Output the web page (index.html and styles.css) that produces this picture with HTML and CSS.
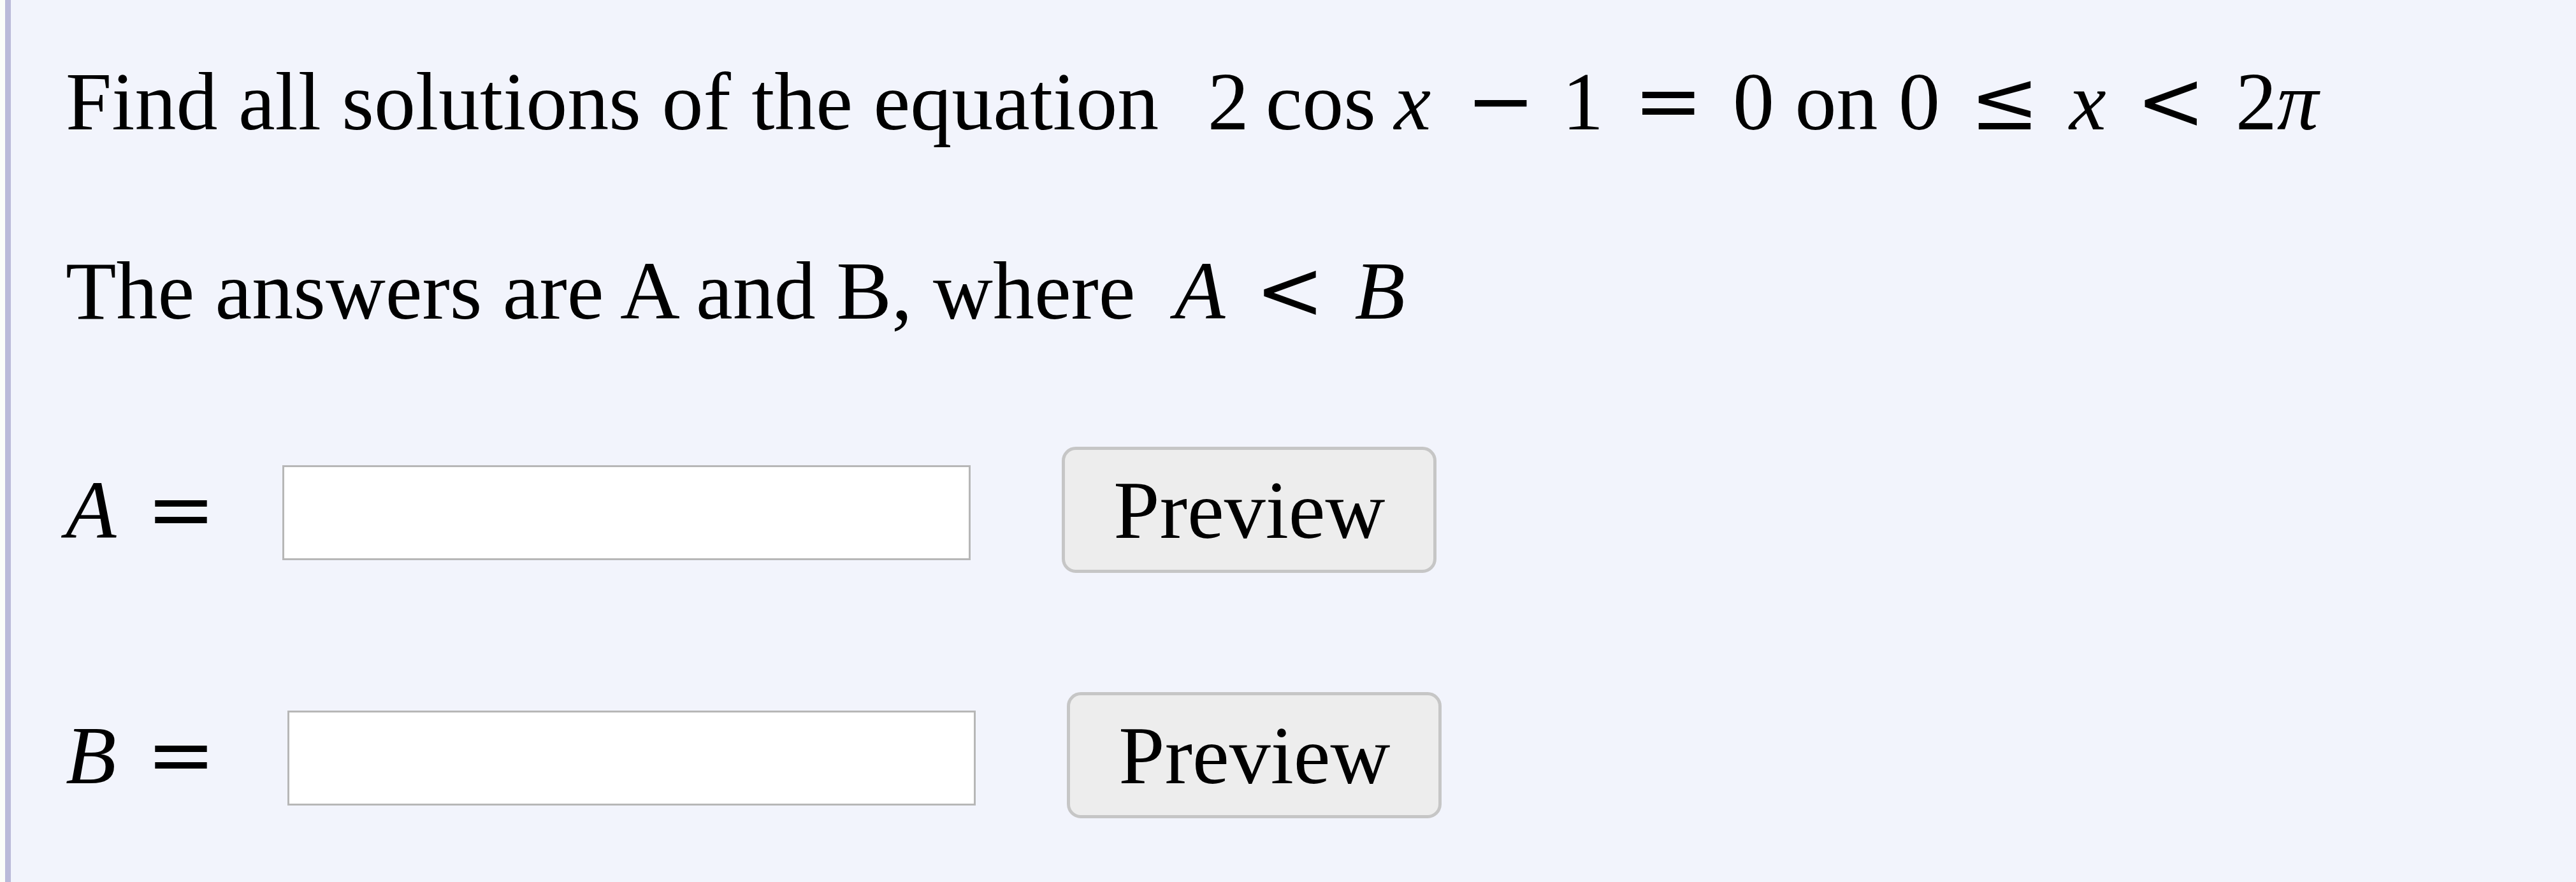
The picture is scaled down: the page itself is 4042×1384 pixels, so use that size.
FILE: index.html
```html
<!DOCTYPE html>
<html lang="en">
<head>
    <meta charset="UTF-8">
    <title>Problem</title>
    <link rel="stylesheet" href="styles.css">
</head>
<body>
    <div class="problem">
        <p class="line first">
            Find all solutions of the equation
            <span class="math math-lead">2<span class="fn">cos</span><i>x</i><span class="bin">&minus;</span>1<span class="rel">=</span>0</span>
            on
            <span class="math">0<span class="rel">&le;</span><i>x</i><span class="rel">&lt;</span>2<i>&pi;</i></span>
        </p>

        <p class="line">
            The answers are A and B, where
            <span class="math math-short"><i>A</i><span class="rel">&lt;</span><i>B</i></span>
        </p>

        <!-- Campos de resposta -->
        <div class="answer-row row-a">
            <span class="math label"><i>A</i><span class="rel">=</span></span>
            <input type="text" class="answer" id="answer-a">
            <button class="btn-preview">Preview</button>
        </div>

        <div class="answer-row row-b">
            <span class="math label"><i>B</i><span class="rel">=</span></span>
            <input type="text" class="answer answer-b" id="answer-b">
            <button class="btn-preview">Preview</button>
        </div>
    </div>
</body>
</html>
```

FILE: styles.css
```css
html, body {
    margin: 0;
    padding: 0;
    background-color: #fbfdf9;
    height: 100%;
}

body {
    font-family: "Liberation Serif", "Times New Roman", serif;
    font-size: 130px;
    color: #000;
}

.problem {
    margin-left: 8px;
    min-height: 100%;
    box-sizing: border-box;
    border-left: 9px solid #babad9;
    background-color: #f2f4fc;
    padding: 84px 0 0 86px;
    white-space: nowrap;
}

.line {
    margin: 0 0 147px;
    line-height: 150px;
}

.math-lead {
    margin-left: 44px;
}

.math-short {
    margin-left: 29px;
}

.math-short .rel {
    margin-right: 60px;
}

.math i {
    font-style: italic;
}

.math .fn {
    margin: 0 0.22em 0 0.2em;
}

/* operadores com a largura da fonte de matemática */
.math .bin,
.math .rel {
    font-family: "DejaVu Serif", serif;
    font-size: 130px;
    line-height: 1;
}

.math .bin {
    margin: 0 42px 0 55px;
}

.math .rel {
    margin: 0 47px;
}

.answer-row {
    display: flex;
    align-items: center;
    height: 198px;
}

.row-a {
    margin-top: 170px;
}

.row-b {
    margin-top: 187px;
}

.label {
    line-height: 150px;
}

.label .rel {
    margin-right: 0;
}

.answer {
    box-sizing: border-box;
    width: 1080px;
    height: 149px;
    margin: 8px 0 0 105px;
    border: 3px solid #b7b7b7;
    background: #fff;
    font-family: inherit;
    font-size: 100px;
}

.answer-b {
    margin-left: 113px;
}

.btn-preview {
    box-sizing: border-box;
    height: 198px;
    margin-left: 143px;
    padding: 0 76px;
    font-family: "Liberation Serif", "Times New Roman", serif;
    font-size: 130px;
    color: #000;
    background-color: #ededed;
    border: 5px solid #c6c6c6;
    border-radius: 22px;
}
```
